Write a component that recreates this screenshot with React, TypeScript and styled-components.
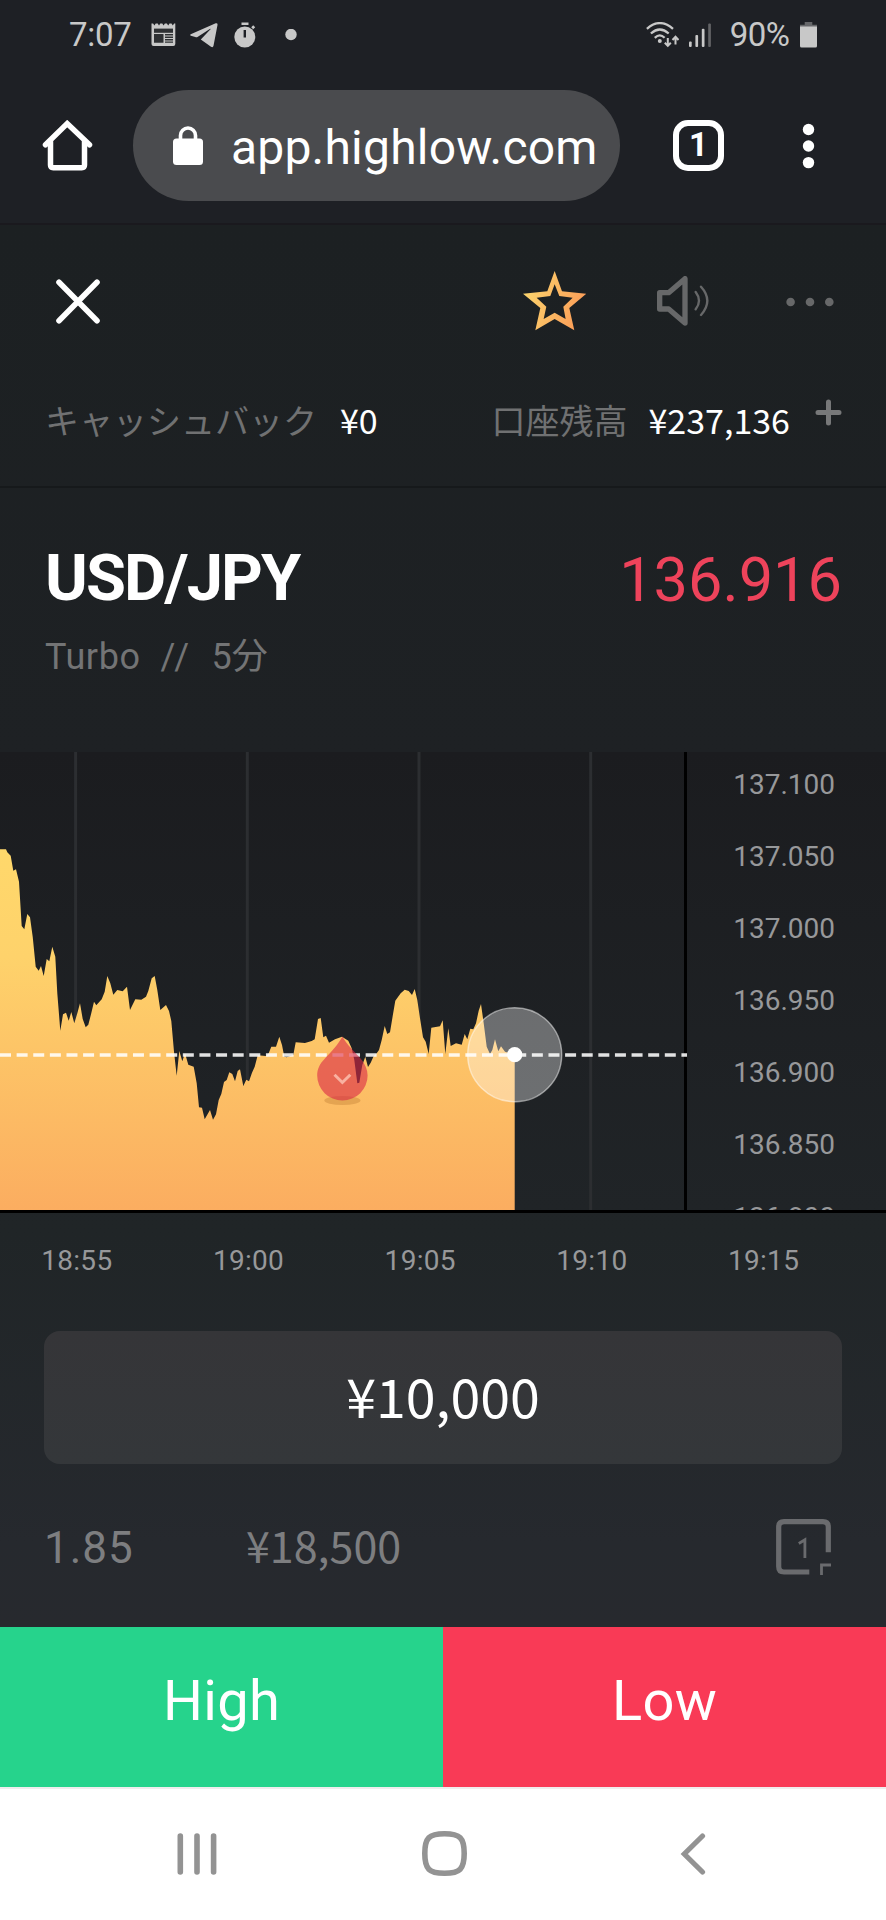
import React from "react";
import styled, { createGlobalStyle } from "styled-components";

const GlobalStyle = createGlobalStyle`
  * { box-sizing: border-box; }
  body { margin: 0; background: #fff; font-family: Roboto, "Noto Sans CJK JP", sans-serif; }
  svg { display: block; flex: none; }
`;

const cjk = `"Noto Sans CJK JP", sans-serif`;

const Screen = styled.div`
  width: 886px;
  height: 1920px;
  display: flex;
  flex-direction: column;
  overflow: hidden;
`;

const StatusBar = styled.header`
  height: 70px;
  flex: none;
  display: flex;
  align-items: center;
  padding: 0 69px;
  background: #1e2025;
  color: #c8c8c8;
  font-size: 33px;
  line-height: 70px;
`;

const StatusText = styled.span<{ $ml?: number; $ls?: number }>`
  margin-left: ${(p) => p.$ml ?? 0}px;
  letter-spacing: ${(p) => p.$ls ?? 0}px;
`;

const StatusIcon = styled.svg<{ $ml: number }>`
  margin-left: ${(p) => p.$ml}px;
`;

const Spacer = styled.div`
  flex: 1;
`;

const BrowserBar = styled.div`
  height: 155px;
  flex: none;
  display: flex;
  align-items: center;
  padding: 20px 70px 22px 42px;
  background: #1e2025;
  border-bottom: 2px solid #1a191e;
`;

const AddressPill = styled.div`
  width: 487px;
  height: 111px;
  margin-left: 40px;
  padding-left: 40px;
  border-radius: 56px;
  background: #4a4b4e;
  display: flex;
  align-items: center;
`;

const Url = styled.span`
  margin-left: 28px;
  padding-top: 5px;
  color: #fff;
  font-size: 48px;
  letter-spacing: 0.2px;
  line-height: 60px;
`;

const TabCount = styled.div`
  width: 51px;
  height: 51px;
  margin-left: 53px;
  border: 6px solid #fff;
  border-radius: 15px;
  color: #fff;
  font-size: 33px;
  font-weight: 700;
  line-height: 38px;
  text-align: center;
`;

const Trading = styled.main`
  height: 1402px;
  flex: none;
  display: flex;
  flex-direction: column;
  background: linear-gradient(#1c2022 0%, #1e2124 38%, #202527 72%, #26292e 94%, #27292e 100%);
`;

const Toolbar = styled.div`
  height: 147px;
  flex: none;
  display: flex;
  align-items: center;
  padding: 5px 52px 0 56px;
`;

const ToolIcon = styled.svg<{ $ml?: number }>`
  margin-left: ${(p) => p.$ml ?? 0}px;
`;

const BalanceRow = styled.div`
  height: 116px;
  flex: none;
  display: flex;
  align-items: center;
  padding: 0 44px 18px 45px;
  border-bottom: 2px solid #16191b;
  font-family: ${cjk};
  font-size: 34px;
  line-height: 50px;
`;

const Label = styled.span`
  color: #707172;
`;

const Amount = styled.span<{ $ml: number }>`
  margin-left: ${(p) => p.$ml}px;
  color: #fff;
`;

const PlusIcon = styled.svg`
  margin: 0 0 15px 25px;
`;

const PairHeader = styled.section`
  height: 264px;
  flex: none;
  padding: 50px 44px 0 45px;
`;

const PairRow = styled.div`
  height: 80px;
  display: flex;
  justify-content: space-between;
  line-height: 80px;
`;

const Pair = styled.h1`
  margin: 0;
  color: #fff;
  font-size: 65px;
  font-weight: 700;
  letter-spacing: -1.9px;
`;

const Rate = styled.span`
  color: #ee435b;
  font-size: 61.3px;
  padding-top: 2px;
`;

const PairMeta = styled.div`
  height: 50px;
  margin-top: 14px;
  display: flex;
  gap: 20px;
  color: #737475;
  font-size: 36px;
  line-height: 50px;
`;

const MetaText = styled.span<{ $ls?: number }>`
  letter-spacing: ${(p) => p.$ls ?? 0}px;
`;

const ChartPanel = styled.section`
  height: 461px;
  flex: none;
  display: flex;
  overflow: hidden;
  background: linear-gradient(#1b1c1f, #202427);
  border-bottom: 3px solid #000;
`;

const Plot = styled.svg`
  overflow: visible;
  z-index: 1;
`;

const PriceAxis = styled.div`
  width: 202px;
  display: flex;
  flex-direction: column;
  align-items: flex-end;
  border-left: 3px solid #000;
  margin-top: -4px;
  padding-right: 51px;
  color: #97989a;
  font-size: 28px;
`;

const PriceTick = styled.span`
  flex: none;
  height: 72.1px;
  line-height: 73px;
`;

const TimeAxis = styled.div`
  height: 118px;
  flex: none;
  display: flex;
  margin-left: -9px;
  padding-top: 22px;
  overflow: hidden;
  color: #97989a;
  font-size: 28px;
  letter-spacing: 0.3px;
  line-height: 52px;
`;

const TimeTick = styled.span`
  width: 171.7px;
  flex: none;
  text-align: center;
`;

const StakeField = styled.div`
  height: 133px;
  flex: none;
  margin: 0 44px;
  border-radius: 16px;
  background: linear-gradient(#353538, #34373a);
  color: #fff;
  font-family: ${cjk};
  font-size: 53.7px;
  line-height: 127px;
  text-align: center;
`;

const PayoutRow = styled.div`
  height: 163px;
  flex: none;
  display: flex;
  align-items: center;
  padding: 0 55px 0 44px;
  color: #7d7e80;
`;

const Multiplier = styled.span`
  width: 202px;
  padding-top: 4px;
  font-size: 44px;
  letter-spacing: 1px;
  line-height: 60px;
`;

const Payout = styled.span`
  padding-bottom: 4px;
  font-family: ${cjk};
  font-size: 43px;
  line-height: 60px;
`;

const OneClickIcon = styled.svg`
  margin-top: 3px;
`;

const OrderBar = styled.div`
  height: 160px;
  flex: none;
  display: grid;
  grid-template-columns: 1fr 1fr;
`;

const OrderButton = styled.button<{ $color: string }>`
  border: 0;
  padding: 0 0 12px;
  background: ${(p) => p.$color};
  color: #fff;
  font: 400 56px/70px Roboto, sans-serif;
  letter-spacing: 0.3px;
`;

const SystemNav = styled.nav`
  flex: 1;
  display: flex;
  align-items: center;
  padding: 0 180px 2px 177px;
  background: #fff;
  border-top: 2px solid #f0eded;
`;

const NavIcon = styled.svg<{ $ml?: number }>`
  margin-left: ${(p) => p.$ml ?? 0}px;
`;

const prices = ["137.100", "137.050", "137.000", "136.950", "136.900", "136.850", "136.800"];
const times = ["18:55", "19:00", "19:05", "19:10", "19:15"];

// Tick series in plot coordinates: x, y pairs.
const series = `0,97.3 6,97.3 7.3,100.3 10.7,103.7 13.3,118.7 16,117.3 19,129.7 21.7,174 24.3,177.3 27.3,162
30,165.3 32.7,184.7 35.7,214.7 38.7,218.7 41,214 43.7,224 46.7,207 49.3,209.3 52.3,194.7 55.3,204.7 57.3,241.3
60.3,278.7 63,262.3 66,260.7 68.7,268.7 71.3,260 74.3,271.3 77.3,261.3 80,251.3 82.7,267 85.7,275.3 88.3,272.7
91,262.3 94,249.7 96.3,253.3 101.7,247.3 104.7,239.7 107.3,224 110.3,231.3 113.3,242.7 117.3,238 122.7,239.3
127,234.7 130,258 135.3,247.3 141.3,247.7 146,244.7 148.3,239 151.7,226.3 154.7,224 157.3,238 160.3,258 166,253
169,259 171.3,269 174,299.7 176.7,323.7 179.3,299 182.3,309.3 185,301.3 188.3,312.7 193.7,314.7 196.7,331.3
199,355.3 202,355.7 204.7,367.3 210,358 213,367.7 216,362.3 218.7,348 221.3,342 224,330 226.7,328 229.3,320.3
232.3,322 235,329.3 237.7,319 240,317.3 243.3,334 246.3,327.7 249,329.3 252,320.7 254.7,314.7 257.7,303.3
266,304 268.7,301.3 271.3,294.7 276,294.7 279.3,284.7 282,293 284.3,304.7 286.7,305.3 293.3,303 295.7,290.3
305,291 311.7,289 314.7,287.3 318,267 320.7,266 323.3,285.3 326,283.7 329,290.7 335,287.3 342,284.7 348.3,288.7
351.7,296.3 354.3,308 357.3,331.3 359.3,330.7 362.3,313 365.3,304.7 368,315 370.7,310.7 373.7,304 376.7,301.3
379,298 381.7,288 384.7,274 387.3,282 390,280.3 392.7,264 395.3,248.7 400.7,241.3 404.7,237.7 408.7,239 412,243
414.7,237 417.3,248 420,266.3 423,285.3 425.7,289.7 428.7,302 431.3,275.7 440,274.3 442.7,268.3 445.3,302
448.3,276.3 450.7,294 456,291.3 461.7,292.7 464.7,282 467.3,287.3 470.3,276.7 473.3,277.3 476,271.3 478.7,258.7
481,252 483.7,271.3 486.7,294.7 490,302 492.3,298 495,287.3 498.3,299.3 501,294.3 505,299.7 514.7,302.7`;

const PriceChart = () => (
  <Plot width="684" height="458" viewBox="0 0 684 458">
    <defs>
      <linearGradient id="area" gradientUnits="userSpaceOnUse" x1="0" y1="97" x2="0" y2="458">
        <stop offset="0" stopColor="#ffd86b" />
        <stop offset="0.3" stopColor="#fed26b" />
        <stop offset="1" stopColor="#fbad60" />
      </linearGradient>
    </defs>
    {[75.6, 247.3, 419, 590.7].map((x) => (
      <rect key={x} x={x - 1.5} width="3" height="458" fill="#2c2e31" />
    ))}
    <polygon points={`0,458 ${series} 514.7,458`} fill="url(#area)" />
    <path d="M0 303H687" stroke="#fff" strokeOpacity="0.87" strokeWidth="3.6" strokeDasharray="11 5.62" />
    <ellipse cx="342.4" cy="348.5" rx="18" ry="4.5" fill="#b7762f" fillOpacity="0.35" />
    <path
      d="M342.4 284.5C338 293 331 300 324.5 307C319.5 312 317.2 317.5 317.2 323.5A25.2 25 0 0 0 367.6 323.5C367.6 317.5 365 312 361 307C355.5 300.5 347 293 342.4 284.5Z"
      fill="#db2846"
      fillOpacity="0.6"
    />
    <path d="M334.5 322.8L342.4 330.5L350.3 322.8" fill="none" stroke="#fdc4b4" strokeOpacity="0.8" strokeWidth="3" />
    <circle cx="514.7" cy="302.7" r="47" fill="#fff" fillOpacity="0.35" stroke="#fff" strokeOpacity="0.5" strokeWidth="1.4" />
    <circle cx="514.7" cy="302.7" r="7.6" fill="#fff" />
  </Plot>
);

const App = () => (
  <>
    <GlobalStyle />
    <Screen>
      <StatusBar>
        <StatusText $ls={-0.3}>7:07</StatusText>
        <StatusIcon $ml={19.5} width="25" height="24" viewBox="0 0 25 24">
          <path d="M0.5 0.5h1.6l1.3 2 1.3-2h2l1.3 2 1.3-2h2l1.3 2 1.3-2h2l1.3 2 1.3-2h2l1.3 2 1.3-2h1.2V21a2 2 0 0 1-2 2H2.500a2 2 0 0 1-2-2Z" fill="#c8c8c8" />
          <path d="M3 5.600h19v4.200H3Z" fill="#2e3033" />
          <path d="M3 11h9.500v8.800H3ZM14 11h8v1.400h-8ZM14 13.600h8v1.400h-8ZM14 16h8v1.400h-8ZM14 18.400h8v1.400h-8Z" fill="#2e3033" />
        </StatusIcon>
        <StatusIcon $ml={14} width="28" height="25" viewBox="0 0 28 25">
          <path d="M0.700 11.300L25.700 0.300Q27.800-0.300 27.500 2L23.500 22.800Q23 25 21 23.800L10.800 16.500L20.500 6.300Q21 5.400 19.800 6L7.500 13.900Q6.500 14.500 5.300 14L0.900 12.700Q-0.300 12 0.700 11.300Z" fill="#c8c8c8" />
        </StatusIcon>
        <StatusIcon $ml={15.7} width="22" height="26" viewBox="0 0 22 26">
          <path d="M7.500 0.500h7v2.500h-7ZM19.200 3.300l2 2-2 2-2-2Z" fill="#c8c8c8" />
          <circle cx="10.800" cy="15" r="10.500" fill="#c8c8c8" />
          <path d="M9.600 8h2.400v7.500h-2.400Z" fill="#1e2025" />
        </StatusIcon>
        <StatusIcon $ml={29} width="12" height="12" viewBox="0 0 12 12">
          <circle cx="6" cy="5.500" r="5.700" fill="#c8c8c8" />
        </StatusIcon>
        <Spacer />
        <StatusIcon $ml={0} width="33" height="26" viewBox="0 0 33 26" fill="none" stroke="#c8c8c8" strokeWidth="2.300">
          <path d="M0.900 6.800Q13.800-4.600 27 6.800M4.900 11.500Q13.800 3.400 22.700 11.500M8.800 15.800Q13.800 11 18.600 15.800" />
          <circle cx="13.800" cy="19" r="2" fill="#c8c8c8" stroke="none" />
          <path d="M21.800 16v7.500M18.800 20.700l3 3.200 3-3.200M29.500 22.500v-7.500M26.500 18l3-3.200 3 3.200" strokeWidth="2" />
        </StatusIcon>
        <StatusIcon $ml={9.5} width="23" height="25" viewBox="0 0 23 25" fill="#c8c8c8">
          <rect x="0" y="18.500" width="2.700" height="5.500" rx="1" />
          <rect x="6.400" y="12" width="2.700" height="12" rx="1" />
          <rect x="12.800" y="5.800" width="2.700" height="18.200" rx="1" />
          <rect x="19.200" y="0.500" width="2.700" height="23.500" rx="1" fill="#626366" />
        </StatusIcon>
        <StatusText $ml={18} $ls={-0.5}>90%</StatusText>
        <StatusIcon $ml={10.5} width="17" height="26" viewBox="0 0 17 26">
          <path d="M4.700 0h7.600v2.800h4.700V6H0V2.800h4.700Z" fill="#66676a" />
          <path d="M0 4.500h17V24a1.500 1.500 0 0 1-1.500 1.500h-14A1.500 1.500 0 0 1 0 24Z" fill="#c8c8c8" />
        </StatusIcon>
      </StatusBar>

      <BrowserBar>
        <svg width="51" height="51" viewBox="0 0 51 51" fill="none" stroke="#fff" strokeWidth="5.500" strokeLinecap="round" strokeLinejoin="round">
          <path d="M3.500 24.800L25.200 3.600L47.500 24.800" strokeLinejoin="miter" />
          <path d="M8.500 22V45Q8.500 47.700 11.200 47.700H39.800Q42.500 47.700 42.500 45V22" />
        </svg>
        <AddressPill>
          <svg width="30" height="39" viewBox="0 0 30 39">
            <path d="M7.500 15V9.500a7.500 7.500 0 0 1 15 0V15" fill="none" stroke="#fff" strokeWidth="3.600" />
            <rect y="12.500" width="30" height="26.500" rx="3.500" fill="#fff" />
          </svg>
          <Url>app.highlow.com</Url>
        </AddressPill>
        <TabCount>1</TabCount>
        <Spacer />
        <svg width="14" height="46" viewBox="0 0 14 46" fill="#fff">
          <circle cx="6.500" cy="6.500" r="5.700" />
          <circle cx="6.500" cy="23" r="5.700" />
          <circle cx="6.500" cy="39.600" r="5.700" />
        </svg>
      </BrowserBar>

      <Trading>
        <Toolbar>
          <svg width="44" height="45" viewBox="0 0 44 45" stroke="#fff" strokeWidth="5.600" strokeLinecap="round">
            <path d="M3 3.200L41 41.800M41 3.200L3 41.800" />
          </svg>
          <Spacer />
          <ToolIcon width="63.300" height="59.400" viewBox="0 0 190 178">
            <defs>
              <linearGradient id="star" x1="0" y1="0.300" x2="1" y2="0.600">
                <stop offset="0" stopColor="#fbd66e" />
                <stop offset="1" stopColor="#fb9b57" />
              </linearGradient>
            </defs>
            <path
              fill="url(#star)"
              fillRule="evenodd"
              d="M95 0L117 61L190 68L139 111L154 178L95 144L37 178L52 111L0 68L73 61ZM95 40L82 75L41 80L70 107L62 144L95 125L128 144L121 107L149 80L109 75Z"
            />
          </ToolIcon>
          <ToolIcon $ml={71} width="52" height="50" viewBox="640 138 156 150" fill="none" stroke="#676869" strokeLinejoin="round" strokeLinecap="round">
            <path d="M648 188H675L724 146V279L675 237H648Z" strokeWidth="16" />
            <path d="M756 186Q776 212 756 238M772 170Q810 212 772 255" strokeWidth="7" />
          </ToolIcon>
          <ToolIcon $ml={77.2} width="48" height="12" viewBox="0 0 48 12" fill="#676869">
            <circle cx="4.600" cy="7" r="4.300" />
            <circle cx="24" cy="7" r="4.300" />
            <circle cx="43.300" cy="7" r="4.300" />
          </ToolIcon>
        </Toolbar>

        <BalanceRow>
          <Label>キャッシュバック</Label>
          <Amount $ml={23}>¥0</Amount>
          <Spacer />
          <Label>口座残高</Label>
          <Amount $ml={21}>¥237,136</Amount>
          <PlusIcon width="27" height="27" viewBox="0 0 27 27" stroke="#777879" strokeWidth="5" strokeLinecap="round">
            <path d="M13.500 3v21M3 13.500h21" />
          </PlusIcon>
        </BalanceRow>

        <PairHeader>
          <PairRow>
            <Pair>USD/JPY</Pair>
            <Rate>136.916</Rate>
          </PairRow>
          <PairMeta>
            <MetaText $ls={0.6}>Turbo</MetaText>
            <MetaText $ls={2.6}>//</MetaText>
            <MetaText>5分</MetaText>
          </PairMeta>
        </PairHeader>

        <ChartPanel>
          <PriceChart />
          <PriceAxis>
            {prices.map((p) => (
              <PriceTick key={p}>{p}</PriceTick>
            ))}
          </PriceAxis>
        </ChartPanel>

        <TimeAxis>
          {times.map((t) => (
            <TimeTick key={t}>{t}</TimeTick>
          ))}
        </TimeAxis>

        <StakeField>¥10,000</StakeField>

        <PayoutRow>
          <Multiplier>1.85</Multiplier>
          <Payout>¥18,500</Payout>
          <Spacer />
          <OneClickIcon width="55" height="56" viewBox="0 0 55 56" fill="none" stroke="#6a6b6e">
            <path d="M52.300 33.300V8Q52.300 2.700 47 2.700H8Q2.700 2.700 2.700 8V47.500Q2.700 53 8 53H33.300" strokeWidth="5.200" />
            <path d="M45.500 56V46H55" strokeWidth="2.800" />
            <path d="M22.800 24.500L28.900 20.800V39" strokeWidth="2.800" />
          </OneClickIcon>
        </PayoutRow>
      </Trading>

      <OrderBar>
        <OrderButton $color="#26d38c">High</OrderButton>
        <OrderButton $color="#f93a56">Low</OrderButton>
      </OrderBar>

      <SystemNav>
        <NavIcon width="40" height="42" viewBox="0 0 40 42" stroke="#939393" strokeWidth="5.600" strokeLinecap="round">
          <path d="M3.300 3v36M20 3v36M36.600 3v36" />
        </NavIcon>
        <NavIcon $ml={205} width="45" height="45" viewBox="0 0 45 45" fill="none" stroke="#939393" strokeWidth="5.600">
          <path d="M22.500 2.800C38 2.800 42.200 7 42.200 22.500S38 42.200 22.500 42.200S2.800 38 2.800 22.500S7 2.800 22.500 2.800Z" />
        </NavIcon>
        <NavIcon $ml={212.5} width="26" height="42" viewBox="0 0 26 42" fill="none" stroke="#939393" strokeWidth="5.200" strokeLinecap="round">
          <path d="M22.500 3L4.300 21L22.500 39" />
        </NavIcon>
      </SystemNav>
    </Screen>
  </>
);

export default App;
